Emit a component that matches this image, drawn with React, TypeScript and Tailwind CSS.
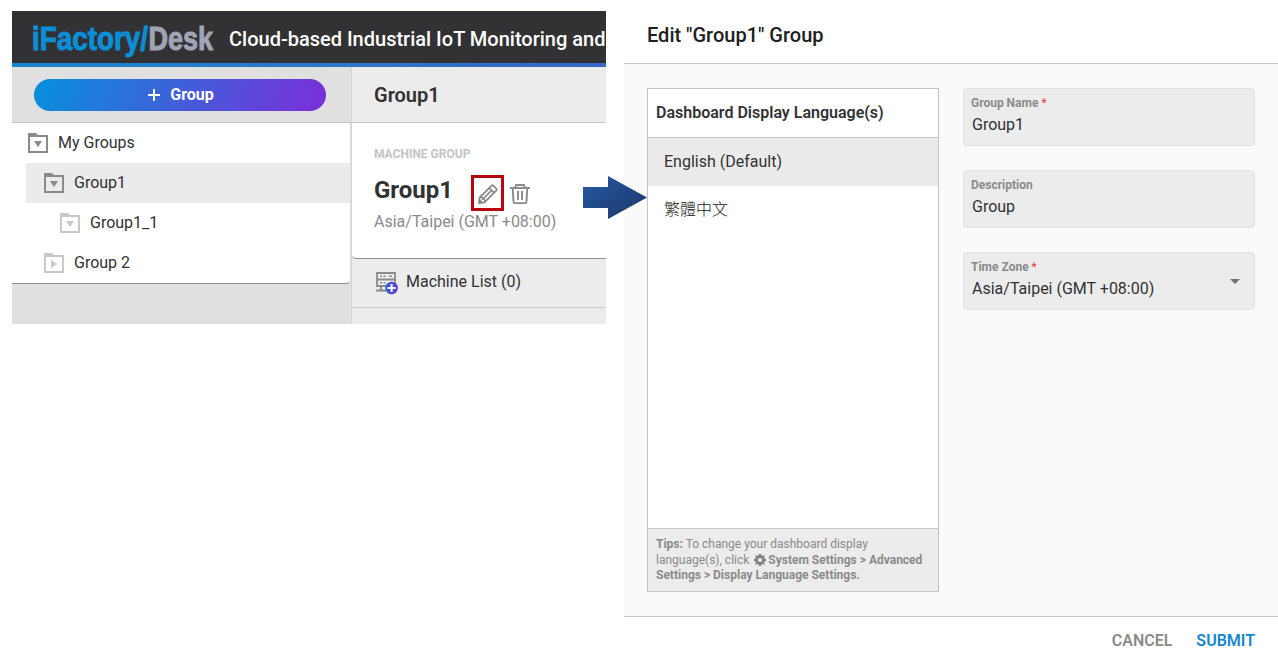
import React from "react";

type FolderProps = { open?: boolean; muted?: boolean };

function FolderIcon({ open = true, muted = false }: FolderProps) {
  const color = muted ? "#c8c8c8" : "#8a8a8a";
  return (
    <svg width="20" height="20" viewBox="0 0 20 20" className="shrink-0">
      <path d="M0 0H8L10 2H20V20H0ZM2 4V18H18V4Z" fill={color} fillRule="evenodd" />
      <path d={open ? "M6 8H14L10 14Z" : "M7 7V15L13 11Z"} fill={color} />
    </svg>
  );
}

function PencilIcon() {
  return (
    <svg width="20" height="20" viewBox="0 0 20 20" fill="none" stroke="#8a8a8a" strokeWidth="1.8" strokeLinejoin="round">
      <path d="M1 19L1.6 13.6L13.6 1.6Q14.5 .8 15.4 1.7L18.3 4.6Q19.2 5.5 18.4 6.4L6.4 18.4Z" />
      <path d="M11.3 4L16 8.7M5 15L13.6 6.4" strokeWidth="1.7" />
      <path d="M1.6 13.6L4.6 13.4V15.4H6.6L6.4 18.4" strokeWidth="1.3" />
      <path d="M1 19L1.5 15.5L4.5 18.5Z" fill="#8a8a8a" strokeWidth="1" />
    </svg>
  );
}

function TrashIcon() {
  return (
    <svg width="20" height="20" viewBox="0 0 20 20" fill="none" stroke="#8a8a8a" strokeWidth="1.9">
      <path d="M0 4H20M5 4L6 1H14L15 4M2.7 4L3.5 17.8Q3.6 19.1 4.9 19.1H15.1Q16.4 19.1 16.5 17.8L17.3 4M8 7V16M12 7V16" />
    </svg>
  );
}

function MachineIcon() {
  return (
    <svg width="23" height="23" viewBox="0 0 23 23">
      <defs>
        <linearGradient id="badge" x1="0" y1="0" x2="1" y2="0">
          <stop stopColor="#2868d8" />
          <stop offset="1" stopColor="#6a38d4" />
        </linearGradient>
      </defs>
      <path d="M1 1H19V7.5H1ZM1 7.5H19V14H1ZM5 14V18M0 18.5H11" fill="none" stroke="#8a8a8a" strokeWidth="1.8" />
      <path d="M4 4.2H6M7.5 4.2H9.5M13 4.2H16M4 10.7H6M7.5 10.7H9.5" stroke="#8a8a8a" strokeWidth="1.6" />
      <circle cx="15.6" cy="16" r="6.3" fill="url(#badge)" />
      <path d="M15.6 12V20M11.6 16H19.6" stroke="#fff" strokeWidth="2" />
    </svg>
  );
}

function GearIcon() {
  return (
    <svg width="12" height="12" viewBox="-6 -6 12 12" className="ml-[2px] inline align-[-2px]">
      <g stroke="#808080">
        <circle r="3.4" fill="none" strokeWidth="2.6" />
        <path d="M0 -6V-4M0 6V4M-6 0H-4M6 0H4M-4.1 -4.1L-3 -3M4.1 4.1L3 3M-4.1 4.1L-3 3M4.1 -4.1L3 -3" strokeWidth="2.4" />
      </g>
    </svg>
  );
}

function TreeRow({ label, indent, ...icon }: FolderProps & { label: string; indent: string }) {
  return (
    <div className={`flex h-10 items-center gap-[10px] ${indent}`}>
      <FolderIcon {...icon} />
      <span>{label}</span>
    </div>
  );
}

function Field({ label, value, required, select }: { label: string; value: string; required?: boolean; select?: boolean }) {
  return (
    <div className="flex h-[58px] w-[292px] items-center justify-between rounded border border-[#e0e0e0] bg-[#ececec] pr-[14px] pl-[7px]">
      <div className="-mt-[7px]">
        <div className="text-xs leading-[22px] font-bold text-[#8a8a8a]">
          {label}
          {required && <span className="ml-[3px] font-normal text-[#f04040]">*</span>}
        </div>
        <div className="pl-px leading-[22px]">{value}</div>
      </div>
      {select && (
        <svg width="10" height="5" viewBox="0 0 10 5">
          <path d="M0 0H10L5 5Z" fill="#707070" />
        </svg>
      )}
    </div>
  );
}

function GroupsPanel() {
  return (
    <section className="mt-[11px] ml-3 flex h-[313px] w-[594px] shrink-0 flex-col overflow-hidden">
      <header className="flex h-[52px] shrink-0 items-center bg-[#323234] pl-5 whitespace-nowrap">
        <svg width="182" height="40" viewBox="0 0 182 40" className="shrink-0 overflow-visible" fontFamily="Liberation Sans, sans-serif" fontWeight="700" fontSize="33" strokeWidth="1">
          <text x="0" y="33" textLength="116" lengthAdjust="spacingAndGlyphs" fill="#0b8ed8" stroke="#0b8ed8">iFactory/</text>
          <text x="116.5" y="33" textLength="64.5" lengthAdjust="spacingAndGlyphs" fill="#a0a4b4" stroke="#a0a4b4">Desk</text>
        </svg>
        <h1 className="mt-1 ml-[15px] text-xl font-medium text-white">Cloud-based Industrial IoT Monitoring and</h1>
      </header>
      <div className="h-1 shrink-0 bg-linear-to-r from-[#1686cc] to-[#3568c8]" />
      <div className="flex min-h-0 grow">
        <aside className="flex w-[339px] shrink-0 flex-col bg-[#e0e0e0]">
          <div className="flex h-14 items-start justify-center border-b border-[#c4c4c4] pt-3 pr-[3px]">
            <button className="flex h-8 w-[292px] items-center justify-center gap-[10px] rounded-full bg-linear-[110deg] from-[#0590dc] to-[#7c2ed8] pl-[2px] font-bold text-white">
              <svg width="12" height="12" viewBox="0 0 12 12"><path d="M6 0V12M0 6H12" stroke="#fff" strokeWidth="2" /></svg>
              <span>Group</span>
            </button>
          </div>
          <nav className="h-[161px] w-[338px] rounded-br border-b border-[#8c8c8c] bg-white">
            <TreeRow label="My Groups" indent="pl-4" />
            <TreeRow label="Group1" indent="ml-[14px] pl-[18px] bg-[#ebebeb]" />
            <TreeRow label="Group1_1" indent="pl-12" muted />
            <TreeRow label="Group 2" indent="pl-8" open={false} muted />
          </nav>
        </aside>
        <main className="flex grow flex-col border-l border-[#d6d6d6] bg-[#ececec]">
          <h2 className="h-14 border-b border-[#c8c8c8] pl-[22px] text-xl leading-[56px] font-semibold">Group1</h2>
          <div className="h-[136px] rounded-bl border-b border-[#909090] bg-white pt-[21px] pl-[22px]">
            <div className="text-xs leading-5 font-bold text-[#c4c4c4]">MACHINE GROUP</div>
            <div className="mt-[8px] flex h-[41px] items-center">
              <div className="w-[97px] -translate-y-[3px] text-2xl font-bold">Group1</div>
              <div className="mt-px flex h-[36px] w-[33px] items-center justify-center border-[3px] border-[#b60510] pt-px"><PencilIcon /></div>
              <div className="mt-[3px] ml-[6px]"><TrashIcon /></div>
            </div>
            <div className="-mt-[3px] leading-6 text-[#8a8a8a]">Asia/Taipei (GMT +08:00)</div>
          </div>
          <div className="flex h-[49px] items-center gap-[7px] border-b border-[#c8c8c8] pl-6">
            <MachineIcon />
            <span className="relative -top-px">Machine List (0)</span>
          </div>
        </main>
      </div>
    </section>
  );
}

function EditDialog() {
  return (
    <section className="ml-[18px] flex h-[670px] w-[654px] shrink-0 flex-col">
      <header className="h-16 shrink-0 border-b border-[#c8c8c8] pt-[7px] pl-[23px] text-xl leading-14 font-medium text-[#202020]">Edit "Group1" Group</header>
      <div className="flex h-[552px] shrink-0 gap-6 bg-[#fafafa] pt-6 pl-[23px]">
        <div className="flex h-[504px] w-[292px] flex-col border border-[#c4c4c4] bg-white">
          <h3 className="h-[49px] border-b border-[#c4c4c4] pl-2 leading-[47px] font-semibold">Dashboard Display Language(s)</h3>
          <div className="h-12 bg-[#ebebeb] pl-4 leading-[48px]">English (Default)</div>
          <div className="h-12 pl-4 leading-[48px] font-light text-[#202020]">繁體中文</div>
          <p className="mt-auto h-[63px] border-t border-[#c4c4c4] bg-[#ececec] pt-[8px] pl-2 text-xs leading-[15.6px] whitespace-nowrap text-[#8a8a8a]">
            <b>Tips:</b> To change your dashboard display<br />
            language(s), click <GearIcon /><b className="ml-[2px]">System Settings &gt; Advanced</b><br />
            <b>Settings &gt; Display Language Settings.</b>
          </p>
        </div>
        <div className="flex flex-col gap-6">
          <Field label="Group Name" value="Group1" required />
          <Field label="Description" value="Group" />
          <Field label="Time Zone" value="Asia/Taipei (GMT +08:00)" required select />
        </div>
      </div>
      <footer className="flex grow items-center justify-end gap-6 border-t border-[#c8c8c8] pr-[23px] pb-[6px] font-semibold">
        <button className="text-[#8a8a8a]">CANCEL</button>
        <button className="text-[#1686d0]">SUBMIT</button>
      </footer>
    </section>
  );
}

export default function App() {
  return (
    <div className="relative flex h-[670px] w-[1278px] items-start overflow-hidden bg-white font-[Roboto,'Noto_Sans_CJK_TC',sans-serif] text-base text-[#323234]">
      <GroupsPanel />
      <EditDialog />
      <svg className="absolute top-[176px] left-[583px]" width="64" height="43" viewBox="0 0 64 43">
        <defs>
          <linearGradient id="arrow" x1="0" y1="0" x2="1" y2="1">
            <stop stopColor="#2858a4" />
            <stop offset="1" stopColor="#193766" />
          </linearGradient>
        </defs>
        <path d="M0 11H25V0L64 21.5L25 43V32H0Z" fill="url(#arrow)" />
      </svg>
    </div>
  );
}
